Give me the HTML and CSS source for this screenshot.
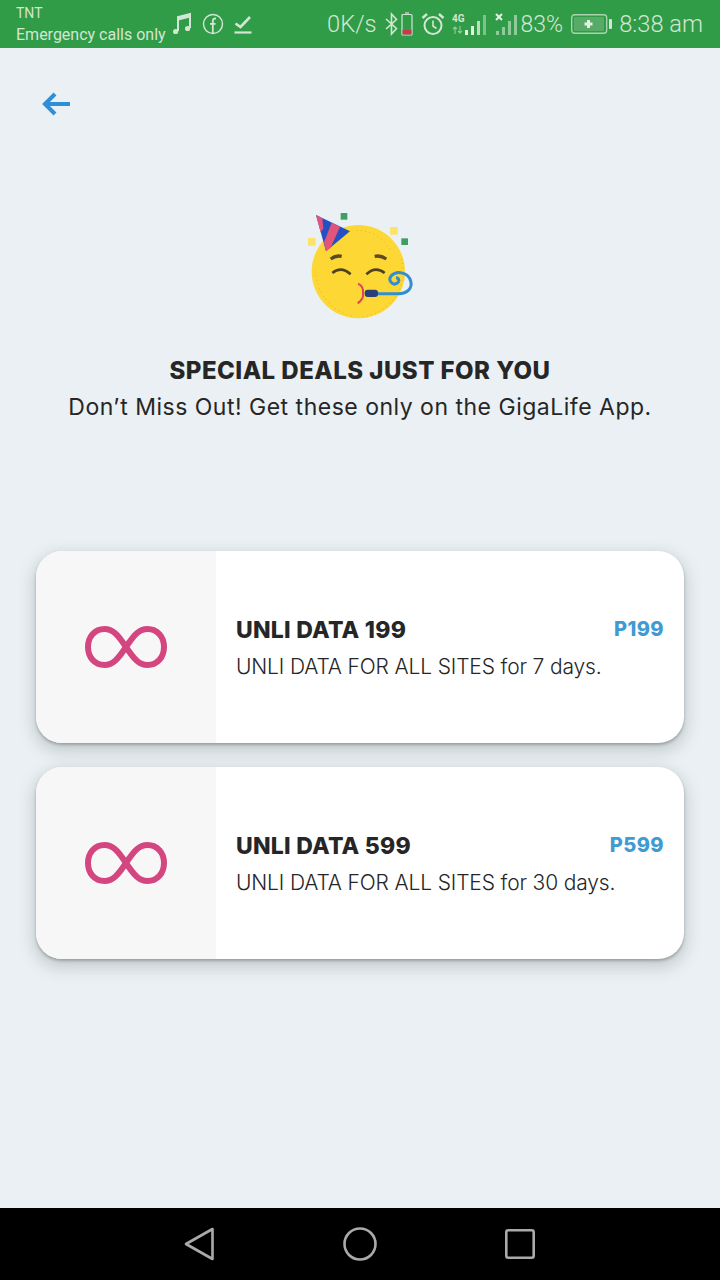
FILE: index.html
```html
<!DOCTYPE html>
<html lang="en">
<head>
  <meta charset="UTF-8">
  <meta name="viewport" content="width=device-width, initial-scale=1.0">
  <title>GigaLife - Special Deals</title>
  <link rel="stylesheet" href="styles.css">
</head>
<body>
<div class="screen">

  <!-- Status bar -->
  <div class="status-bar">
    <div class="carrier">
      <span class="carrier-name">TNT</span>
      <span class="carrier-note">Emergency calls only</span>
    </div>
    <div class="status-left-icons">
      <svg class="ic" width="20" height="24" viewBox="0 0 20 24" fill="none" stroke="#d3e6d3" stroke-width="2">
        <path d="M6 19V5L18 2V16"/>
        <path d="M6 7L18 4" stroke-width="3"/>
        <circle cx="3.6" cy="19.5" r="2.6" fill="#d3e6d3" stroke="none"/>
        <circle cx="15.6" cy="16.5" r="2.6" fill="#d3e6d3" stroke="none"/>
      </svg>
      <svg class="ic" width="22" height="22" viewBox="0 0 22 22" fill="none" stroke="#d3e6d3" stroke-width="1.4">
        <circle cx="11" cy="11" r="9.5"/>
        <path d="M14 5.6C11.8 5.2 10.8 6.2 10.8 8.2V20M8 10.8H13.6" stroke-width="1.8"/>
      </svg>
      <svg class="ic" width="18" height="20" viewBox="0 0 18 20" fill="none" stroke="#d3e6d3" stroke-width="2.6">
        <path d="M1.5 9.5L6.5 13L16 3"/>
        <path d="M0.5 18.5H17.5" stroke-width="2.2"/>
      </svg>
    </div>
    <div class="status-right">
      <span class="speed">0K/s</span>
      <svg class="ic bt" width="13" height="24" viewBox="0 0 13 24" fill="none" stroke="#d3e6d3" stroke-width="1.6">
        <path d="M1 7L11.5 16.5L6.5 22V2L11.5 7.5L1 17"/>
      </svg>
      <svg class="ic bat-small" width="12" height="24" viewBox="0 0 12 24" fill="none" stroke="#d3e6d3" stroke-width="1.2">
        <path d="M4 1H8"/>
        <rect x="1" y="2.5" width="10" height="20.5" rx="1"/>
        <rect x="1.5" y="18" width="9" height="4.500" fill="#c8384f" stroke="none"/>
      </svg>
      <svg class="ic alarm" width="24" height="24" viewBox="0 0 24 24" fill="none" stroke="#d3e6d3" stroke-width="2">
        <circle cx="12" cy="13.5" r="8.5"/>
        <path d="M12 8.5V14L15.5 16.5" stroke-width="1.6"/>
        <path d="M1.5 6L6 2M22.5 6L18 2" stroke-width="2.4"/>
      </svg>
      <svg class="ic sig-one" width="37" height="24" viewBox="0 0 37 24">
        <text x="0" y="10" class="net-label">4G</text>
        <path d="M3 15V22M1 17L3 15L5 17M8 14V21M6 19L8 21L10 19" stroke="#8fca9a" stroke-width="1.2" fill="none"/>
        <rect x="13" y="18" width="3" height="5" fill="#e3f0e3"/>
        <rect x="19" y="14" width="3" height="9" fill="#e3f0e3"/>
        <rect x="25" y="9" width="3" height="14" fill="#bfdcbf"/>
        <rect x="31" y="3" width="3" height="20" fill="#7fc08c"/>
      </svg>
      <svg class="ic sig-two" width="24" height="24" viewBox="0 0 24 24">
        <path d="M1 2L7 8M7 2L1 8" stroke="#e3f0e3" stroke-width="2"/>
        <rect x="1" y="19" width="3" height="4" fill="#8fca9a"/>
        <rect x="7" y="15" width="3" height="8" fill="#8fca9a"/>
        <rect x="13" y="9" width="3" height="14" fill="#8fca9a"/>
        <rect x="19" y="3" width="3" height="20" fill="#8fca9a"/>
      </svg>
      <span class="percent">83%</span>
      <svg class="ic bat-big" width="41" height="20" viewBox="0 0 41 20" fill="none">
        <rect x="0.7" y="0.7" width="35" height="18.6" rx="3" stroke="#a9d3ae" stroke-width="1.4"/>
        <rect x="3" y="3" width="30" height="14" fill="#57ab67"/>
        <path d="M17.5 6V14M13.5 10H21.5" stroke="#e3efe3" stroke-width="3"/>
        <rect x="38" y="5" width="3" height="10" rx="1" fill="#d3e6d3"/>
      </svg>
      <span class="clock">8:38 am</span>
    </div>
  </div>

  <div class="content">
    <a class="back" href="#">
      <svg width="30" height="24" viewBox="0 0 30 24" fill="none" stroke="#2f8fd6" stroke-width="4">
        <path d="M29 12H4"/>
        <path d="M14 2L4 12L14 22"/>
      </svg>
    </a>

    <!-- Heading -->
    <div class="hero">
      <svg class="party-face" width="140" height="130" viewBox="0 0 420 390">
        <circle cx="205" cy="218" r="140" fill="#fdd835"/>
        <path d="M335 180A140 140 0 0 1 210 355" fill="none" stroke="#e9933a" stroke-width="3" stroke-dasharray="2 11"/>
        <path d="M78 230A140 140 0 0 0 190 352" fill="none" stroke="#e9933a" stroke-width="3" stroke-dasharray="2 11"/>
        <path d="M200 94A120 120 0 0 1 300 150" fill="none" stroke="#e9933a" stroke-width="3" stroke-dasharray="2 11"/>
        <rect x="152" y="42" width="20" height="20" fill="#3f9f63"/>
        <rect x="334" y="118" width="20" height="20" fill="#3f9f63"/>
        <rect x="300" y="84" width="23" height="23" rx="3" fill="#fbe36a"/>
        <rect x="54" y="117" width="23" height="23" rx="3" fill="#fbe36a"/>
        <polygon points="78,48 180,97 108,157" fill="#2450c4"/>
        <polygon points="78,48 97,57 100,88 92,100" fill="#e2557a"/>
        <polygon points="125,71 150,83 122,146 108,157 102,130" fill="#e2557a"/>
        <path d="M122 180Q138 168 155 172M254 172Q272 168 289 180" fill="none" stroke="#5b4a24" stroke-width="10"/>
        <path d="M127 222Q153 200 182 226M229 226Q256 200 284 222" fill="none" stroke="#4f4122" stroke-width="8"/>
        <path d="M204 254Q222 262 219 284Q222 300 203 313" fill="none" stroke="#e0445a" stroke-width="6"/>
        <path d="M260 284H325C352 284 368 268 362 246C356 222 322 212 304 230C292 244 308 262 322 252C330 245 326 236 318 236" fill="none" stroke="#2f8fd0" stroke-width="9"/>
        <rect x="224" y="272" width="40" height="22" rx="9" fill="#2d3f78"/>
      </svg>
      <h1 class="hero-title">SPECIAL DEALS JUST FOR YOU</h1>
      <p class="hero-sub">Don’t Miss Out! Get these only on the GigaLife App.</p>
    </div>

    <!-- Deals -->
    <div class="deals">
      <div class="deal-card">
        <div class="deal-icon">
          <svg width="84" height="44" viewBox="0 0 84 44" fill="none" stroke="#d4467f" stroke-width="6">
            <path d="M42 22C34 10 29 4 20.500 4C10.500 4 4 12 4 22C4 32 10.500 40 20.500 40C29 40 34 34 42 22C50 10 55 4 63.500 4C73.500 4 80 12 80 22C80 32 73.500 40 63.500 40C55 40 50 34 42 22Z"/>
          </svg>
        </div>
        <div class="deal-body">
          <div class="deal-top">
            <span class="deal-name">UNLI DATA 199</span>
            <span class="deal-price">P199</span>
          </div>
          <p class="deal-desc">UNLI DATA FOR ALL SITES for 7 days.</p>
        </div>
      </div>

      <div class="deal-card">
        <div class="deal-icon">
          <svg width="84" height="44" viewBox="0 0 84 44" fill="none" stroke="#d4467f" stroke-width="6">
            <path d="M42 22C34 10 29 4 20.500 4C10.500 4 4 12 4 22C4 32 10.500 40 20.500 40C29 40 34 34 42 22C50 10 55 4 63.500 4C73.500 4 80 12 80 22C80 32 73.500 40 63.500 40C55 40 50 34 42 22Z"/>
          </svg>
        </div>
        <div class="deal-body">
          <div class="deal-top">
            <span class="deal-name">UNLI DATA 599</span>
            <span class="deal-price">P599</span>
          </div>
          <p class="deal-desc">UNLI DATA FOR ALL SITES for 30 days.</p>
        </div>
      </div>
    </div>
  </div>

  <!-- Navigation bar -->
  <div class="nav-bar">
    <svg width="31" height="34" viewBox="0 0 31 34" fill="none" stroke="#a8aca8" stroke-width="2.6" stroke-linejoin="round">
      <path d="M28.500 2V32L2 17Z"/>
    </svg>
    <svg width="34" height="34" viewBox="0 0 34 34" fill="none" stroke="#a8aca8" stroke-width="2.6">
      <circle cx="17" cy="17" r="15.500"/>
    </svg>
    <svg width="30" height="30" viewBox="0 0 30 30" fill="none" stroke="#a8aca8" stroke-width="2.6">
      <rect x="1.300" y="1.300" width="27.400" height="27.400" rx="2"/>
    </svg>
  </div>

</div>
</body>
</html>
```

FILE: styles.css
```css
html, body {
  margin: 0;
  padding: 0;
}
body {
  font-family: Inter, "Open Sans", sans-serif;
  background-color: #eaf0f3;
}
.screen {
  display: flex;
  flex-direction: column;
  height: 1280px;
  overflow: hidden;
}

/* status bar */
.status-bar {
  display: flex;
  align-items: center;
  height: 48px;
  padding: 0 17px 0 16px;
  background-color: #309c47;
  color: #d3e6d3;
  font-family: Roboto, sans-serif;
}
.carrier {
  display: flex;
  flex-direction: column;
  align-self: flex-start;
  width: 156px;
  padding-top: 3px;
  font-size: 16px;
  line-height: 23px;
}
.carrier-name {
  font-size: 14px;
  line-height: 20px;
}
.status-left-icons {
  display: flex;
  align-items: center;
  gap: 10px;
}
.ic {
  display: block;
}
.status-right {
  display: flex;
  align-items: center;
  margin-left: auto;
  font-size: 23.7px;
  font-weight: 300;
}
.bt {
  margin-left: 8px;
}
.bat-small {
  margin-left: 3px;
}
.alarm {
  margin-left: 8px;
}
.sig-one {
  margin-left: 7px;
}
.sig-two {
  margin-left: 6px;
}
.net-label {
  font-family: Roboto, sans-serif;
  font-size: 10px;
  font-weight: 700;
  fill: #d3e6d3;
}
.percent {
  margin-left: 2px;
  font-size: 23px;
}
.bat-big {
  margin-left: 8px;
}
.clock {
  margin-left: 7px;
}

/* main area */
.content {
  flex: 1;
}
.back {
  display: block;
  width: 30px;
  height: 24px;
  margin: 44px 0 0 41px;
}
.hero {
  display: flex;
  flex-direction: column;
  align-items: center;
  margin-top: 83px;
}
.party-face {
  display: block;
}
.hero-title {
  margin: 25px 0 0;
  font-size: 24px;
  line-height: 34px;
  font-weight: 800;
  letter-spacing: 0.47px;
  color: #262626;
}
.hero-sub {
  margin: 2px 0 0;
  font-size: 23px;
  line-height: 34px;
  font-weight: 400;
  letter-spacing: 0.5px;
  color: #262626;
}

/* deal cards */
.deals {
  display: flex;
  flex-direction: column;
  gap: 24px;
  margin-top: 127px;
  padding: 0 36px;
}
.deal-card {
  display: flex;
  height: 192px;
  border-radius: 26px;
  overflow: hidden;
  background-color: #fff;
  box-shadow: 0 2px 3px rgba(90, 100, 100, 0.45), 0 6px 14px 4px rgba(130, 140, 140, 0.3);
}
.deal-icon {
  display: flex;
  align-items: center;
  justify-content: center;
  width: 180px;
  background-color: #f7f7f8;
}
.deal-body {
  flex: 1;
  padding: 63px 20px 0;
}
.deal-top {
  display: flex;
  justify-content: space-between;
  align-items: flex-start;
}
.deal-name {
  font-size: 23px;
  line-height: 32px;
  font-weight: 800;
  letter-spacing: 0.25px;
  color: #262626;
}
.deal-price {
  font-size: 20px;
  line-height: 30px;
  font-weight: 800;
  letter-spacing: 0.4px;
  color: #3f9bd2;
}
.deal-desc {
  margin: 5px 0 0;
  font-size: 21px;
  line-height: 32px;
  font-weight: 300;
  letter-spacing: -0.15px;
  color: #262626;
}

/* navigation bar */
.nav-bar {
  display: flex;
  align-items: center;
  gap: 128px;
  height: 72px;
  padding-left: 184px;
  background-color: #000;
}
```
